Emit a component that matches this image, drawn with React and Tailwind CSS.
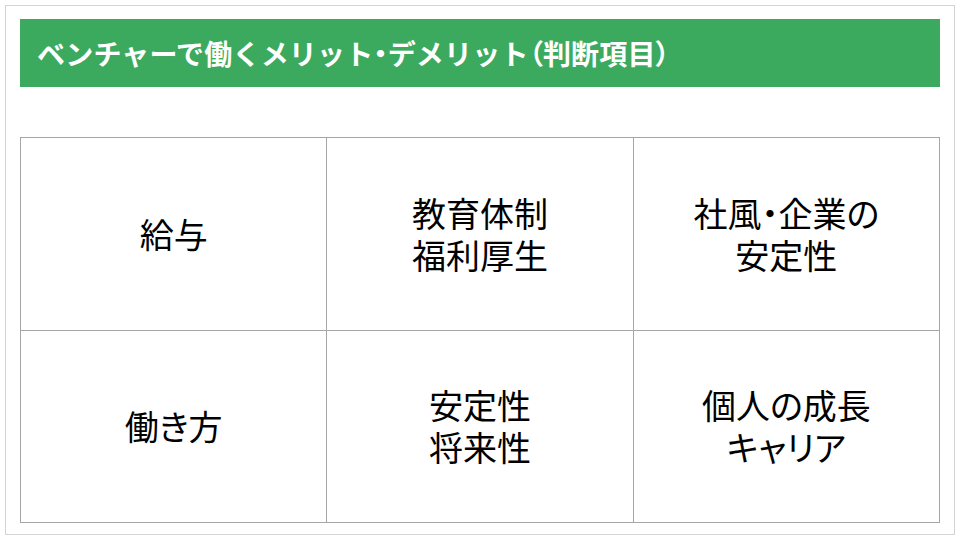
const CELLS = [
  ['給与'],
  ['教育体制', '福利厚生'],
  ['社風・企業の', '安定性'],
  ['働き方'],
  ['安定性', '将来性'],
  ['個人の成長', 'キャリア'],
];

// punctuation in the title is set proportionally, the rest stays full width
const Narrow = ({ children }) => (
  <span className="[font-feature-settings:'palt']">{children}</span>
);

export default function App() {
  return (
    <div
      className="w-[960px] h-[540px] bg-white pt-[5px] pl-[5px]"
      style={{ fontFamily: '"Noto Sans CJK JP", "Noto Sans", sans-serif' }}
    >
      <div className="w-[950px] h-[530px] border border-[#d4d4d4] px-[14px] pt-[13px]">
        <div className="h-[68px] bg-[#3baa5f] flex items-center pl-[17px]">
          <h1 className="text-white font-bold text-[28px] leading-none tracking-[0.2px] whitespace-nowrap">
            ベンチャーで働くメリット<Narrow>・</Narrow>デメリット<Narrow>（</Narrow>判断項目<Narrow>）</Narrow>
          </h1>
        </div>
        <div className="mt-[50px] grid grid-cols-3 grid-rows-2 h-[386px] border-t border-l border-[#a6a6a6] [font-feature-settings:'palt']">
          {CELLS.map((lines, i) => (
            <div
              key={i}
              className="border-r border-b border-[#a6a6a6] flex flex-col items-center justify-center text-black text-[34px]"
            >
              {lines.map((t) => (
                <p key={t} className="h-[42px] leading-[42px] whitespace-nowrap">{t}</p>
              ))}
            </div>
          ))}
        </div>
      </div>
    </div>
  );
}
